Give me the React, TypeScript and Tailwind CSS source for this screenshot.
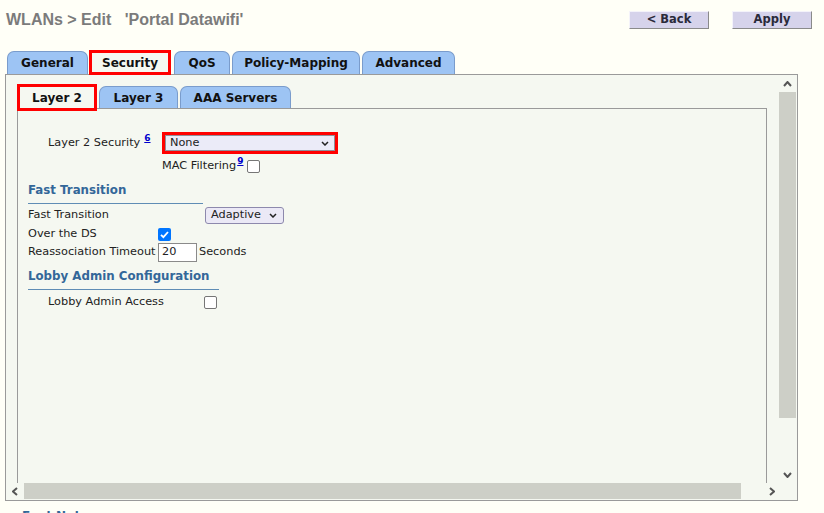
import React from "react";

function Chevron({ dir, color = "#555", w = 9, h = 6, sw = 2 }: { dir: "up" | "down" | "left" | "right"; color?: string; w?: number; h?: number; sw?: number }) {
  const vert = dir === "up" || dir === "down";
  const W = vert ? w : h;
  const H = vert ? h : w;
  let d = "";
  if (dir === "up") d = `M1 ${H - 1} L${W / 2} 1 L${W - 1} ${H - 1}`;
  if (dir === "down") d = `M1 1 L${W / 2} ${H - 1} L${W - 1} 1`;
  if (dir === "left") d = `M${W - 1} 1 L1 ${H / 2} L${W - 1} ${H - 1}`;
  if (dir === "right") d = `M1 1 L${W - 1} ${H / 2} L1 ${H - 1}`;
  return (
    <svg width={W} height={H} viewBox={`0 0 ${W} ${H}`}>
      <path d={d} fill="none" stroke={color} strokeWidth={sw} />
    </svg>
  );
}

function Checkbox({ checked = false }: { checked?: boolean }) {
  if (checked) {
    return (
      <div className="w-[13px] h-[13px] rounded-[2px] bg-[#0075ff] flex items-center justify-center">
        <svg width="11" height="11" viewBox="0 0 11 11">
          <path d="M2 5.8 L4.4 8.2 L9 3" fill="none" stroke="#fff" strokeWidth="1.8" />
        </svg>
      </div>
    );
  }
  return <div className="w-[13px] h-[13px] rounded-[2px] border border-[#767676] bg-white" />;
}

function Sup({ n, gap }: { n: string; gap: boolean }) {
  return (
    <span className={`${gap ? "ml-[4px]" : "ml-px"} relative -top-[5px] text-[9px] font-bold text-[#0000cc] underline`}>{n}</span>
  );
}

const tab =
  "h-[23px] flex items-center justify-center bg-[#9dc4f4] border border-b-0 border-[#7a9ccc] rounded-t-[7px] text-[12px] font-bold text-[#111]";
const innerTab =
  "h-[22px] flex items-center justify-center bg-[#9dc4f4] border border-b-0 border-[#7a9ccc] rounded-t-[7px] text-[12px] font-bold text-[#111]";

export default function App() {
  return (
    <div className="w-[824px] h-[513px] overflow-hidden bg-[#fffff7] font-['DejaVu_Sans',Verdana,sans-serif] text-[11.3px] text-[#222]">
      {/* Header */}
      <div className="pt-[11px] h-[29px] flex items-center justify-between">
        <div className="pl-[6px] font-['Liberation_Sans',Arial,sans-serif] font-bold text-[16px] leading-[18px] text-[#7b7b7b] whitespace-pre">
          {"WLANs > Edit   'Portal Datawifi'"}
        </div>
        <div className="flex pr-[12px]">
          <div className="w-[80px] h-[18px] flex items-center justify-center bg-[#d6d3eb] border border-t-[#f4f3fa] border-l-[#f4f3fa] border-b-[#8a8a8a] border-r-[#8a8a8a] text-[11.5px] font-bold text-[#2a2a3a]">
            &lt; Back
          </div>
          <div className="ml-[23px] w-[80px] h-[18px] flex items-center justify-center bg-[#d6d3eb] border border-t-[#f4f3fa] border-l-[#f4f3fa] border-b-[#8a8a8a] border-r-[#8a8a8a] text-[11.5px] font-bold text-[#2a2a3a]">
            Apply
          </div>
        </div>
      </div>

      {/* Tabs */}
      <div className="mt-[22px] h-[23px] pl-[7px] flex items-end">
        <div className={`${tab} w-[81px]`}>General</div>
        <div className="ml-[1px] w-[82px] h-[25px] -mb-px relative z-10 border-[3px] border-[#ff0000] bg-[#f5f8f1] flex items-center justify-center text-[12px] font-bold text-[#111]">
          Security
        </div>
        <div className={`${tab} ml-[3px] w-[56px]`}>QoS</div>
        <div className={`${tab} ml-[2px] w-[128px]`}>Policy-Mapping</div>
        <div className={`${tab} ml-[2px] w-[93px]`}>Advanced</div>
      </div>

      {/* Panel */}
      <div className="ml-[5px] w-[793px] h-[427px] border border-[#9a9a9a] bg-[#f5f8f1] flex flex-col">
        <div className="h-[408px] flex">
          {/* content */}
          <div className="w-[773px] pl-[11px] pt-[9px] flex flex-col">
            <div className="h-[24px] flex items-end">
              <div className="w-[80px] h-[27px] -mb-[3px] relative z-10 border-[3px] border-[#ff0000] bg-[#f5f8f1] flex items-center justify-center text-[12px] font-bold text-[#111]">
                Layer 2
              </div>
              <div className={`${innerTab} ml-[2px] w-[79px]`}>Layer 3</div>
              <div className={`${innerTab} ml-[2px] w-[111px]`}>AAA Servers</div>
            </div>
            <div className="w-[750px] flex-1 border-l border-t border-r border-[#9a9a9a] pl-[10px] flex flex-col">
              {/* Layer 2 Security */}
              <div className="mt-[23px] h-[22px] flex items-center">
                <div className="ml-[20px] w-[114px] whitespace-nowrap">
                  Layer 2 Security<Sup n="6" gap />
                </div>
                <div className="w-[176px] h-[22px] border-[3px] border-[#ff0000] bg-white">
                  <div className="h-full border border-[#8f8f9a] bg-[#ebebf8] flex items-center justify-between pl-[4px] pr-[5px]">
                    <span>None</span>
                    <Chevron dir="down" color="#222" w={8} h={5} sw={1.5} />
                  </div>
                </div>
              </div>
              {/* MAC Filtering */}
              <div className="mt-[3px] h-[18px] flex items-center">
                <div className="ml-[134px] whitespace-nowrap">
                  MAC Filtering<Sup n="9" gap={false} />
                </div>
                <div className="ml-[4px]">
                  <Checkbox />
                </div>
              </div>
              {/* Fast Transition heading */}
              <div className="mt-[7px] h-[16px] leading-[16px] text-[11.8px] font-bold text-[#336799]">Fast Transition</div>
              <div className="mt-[5px] w-[175px] h-px bg-[#5f8db5]" />
              <div className="mt-[3px] h-[17px] flex items-center">
                <div className="w-[177px]">Fast Transition</div>
                <div className="w-[79px] h-[17px] rounded-[3px] border border-[#8d89ad] bg-[#ebe9f6] flex items-center justify-between pl-[5px] pr-[6px]">
                  <span>Adaptive</span>
                  <Chevron dir="down" color="#222" w={8} h={5} sw={1.5} />
                </div>
              </div>
              <div className="mt-[2px] h-[16px] flex items-center">
                <div className="w-[130px]">Over the DS</div>
                <Checkbox checked />
              </div>
              <div className="mt-[1px] h-[19px] flex items-center">
                <div className="w-[130px] whitespace-nowrap">Reassociation Timeout</div>
                <div className="w-[39px] h-[19px] border border-[#8a8a8a] bg-white pl-[3px] flex items-center">20</div>
                <div className="ml-[2px]">Seconds</div>
              </div>
              {/* Lobby heading */}
              <div className="mt-[6px] h-[16px] leading-[16px] text-[11.8px] font-bold text-[#336799]">Lobby Admin Configuration</div>
              <div className="mt-[5px] w-[191px] h-px bg-[#5f8db5]" />
              <div className="mt-[4px] h-[16px] flex items-center">
                <div className="ml-[20px] w-[156px]">Lobby Admin Access</div>
                <Checkbox />
              </div>
            </div>
          </div>
          {/* vertical scrollbar */}
          <div className="w-[17px] flex flex-col">
            <div className="h-[17px] flex items-center justify-center">
              <Chevron dir="up" w={9} h={6} />
            </div>
            <div className="h-[326px] bg-[#cdcfc7]" />
            <div className="flex-1" />
            <div className="h-[17px] flex items-center justify-center">
              <Chevron dir="down" w={9} h={6} />
            </div>
          </div>
        </div>
        {/* horizontal scrollbar */}
        <div className="h-[16px] flex">
          <div className="w-[18px] flex items-center justify-center">
            <Chevron dir="left" w={9} h={6} />
          </div>
          <div className="w-[717px] bg-[#cdcfc7]" />
          <div className="flex-1" />
          <div className="w-[17px] flex items-center justify-center">
            <Chevron dir="right" w={9} h={6} />
          </div>
          <div className="w-[17px]" />
        </div>
      </div>

      <div className="mt-[8px] pl-[22px] text-[12px] font-bold text-[#336799] leading-[14px]">Foot Notes</div>
    </div>
  );
}
